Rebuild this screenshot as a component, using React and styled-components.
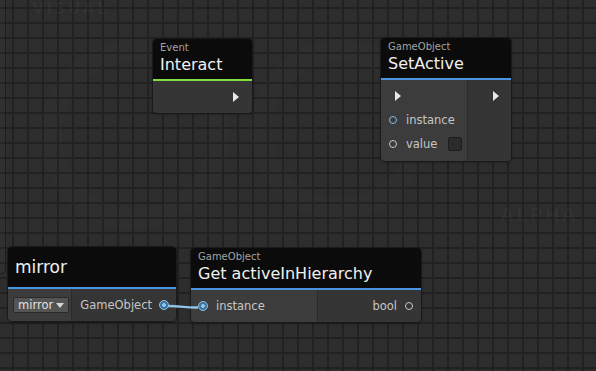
import React from 'react';
import styled, { createGlobalStyle } from 'styled-components';

const GlobalStyle = createGlobalStyle`
  *, *::before, *::after {
    box-sizing: border-box;
  }
  html, body {
    margin: 0;
    padding: 0;
    background: #2c2c2c;
  }
  body {
    font-family: 'DejaVu Sans', 'Liberation Sans', sans-serif;
  }
`;

const Canvas = styled.div`
  position: relative;
  width: 596px;
  height: 371px;
  overflow: hidden;
  background-color: #2d2d2d;
  background-image: linear-gradient(to right, #212121 2px, transparent 2px),
    linear-gradient(to bottom, #212121 2px, transparent 2px);
  background-size: 15px 15px;
  background-position: 12px 7px;
`;

const Watermark = styled.div`
  position: absolute;
  left: ${({ x }) => x}px;
  top: ${({ y }) => y}px;
  font-size: ${({ size }) => size}px;
  line-height: 1;
  font-weight: bold;
  letter-spacing: 2px;
  color: rgba(255, 255, 255, 0.03);
  pointer-events: none;
`;

const Ring = styled.div`
  position: absolute;
  left: ${({ x }) => x}px;
  top: ${({ y }) => y}px;
  width: ${({ size }) => size}px;
  height: ${({ size }) => size}px;
  border-radius: 50%;
  border: 22px solid rgba(255, 255, 255, 0.012);
  pointer-events: none;
`;

const Frame = styled.div`
  position: absolute;
  left: -10px;
  top: -10px;
  width: 16px;
  height: 284px;
  border: 1px solid #1c1c1c;
  border-radius: 5px;
  background: rgba(255, 255, 255, 0.015);
`;

const Node = styled.div`
  position: absolute;
  left: ${({ x }) => x}px;
  top: ${({ y }) => y}px;
  width: ${({ w }) => w}px;
  border: 1px solid #1a1a1a;
  border-radius: 5px;
  overflow: hidden;
  display: flex;
  flex-direction: column;
  box-shadow: 0 1px 2px rgba(0, 0, 0, 0.25);
`;

const Header = styled.div`
  height: 42px;
  background: #0b0b0b;
  border-bottom: 2px solid ${({ accent }) => accent};
  padding: 0 7px;
  display: flex;
  flex-direction: column;
  justify-content: ${({ centered }) => (centered ? 'center' : 'flex-start')};
`;

const Category = styled.div`
  margin-top: 3px;
  font-size: 10px;
  line-height: 11px;
  color: #a3a3a3;
`;

const Title = styled.div`
  margin-top: ${({ centered }) => (centered ? '0' : '2px')};
  font-size: ${({ big }) => (big ? 17 : 16)}px;
  line-height: 20px;
  color: #f0f0f0;
  white-space: nowrap;
`;

const Body = styled.div`
  display: flex;
  height: ${({ h }) => h}px;
`;

const Column = styled.div`
  width: ${({ w }) => (w ? `${w}px` : 'auto')};
  flex: ${({ w }) => (w ? 'none' : '1')};
  background: ${({ light }) => (light ? '#3c3c3c' : '#353535')};
  border-left: ${({ divider }) => (divider ? '1px solid #2a2a2a' : 'none')};
  display: flex;
  flex-direction: column;
  padding-top: ${({ pt }) => pt || 0}px;
`;

const Row = styled.div`
  height: ${({ h }) => h || 24}px;
  display: flex;
  align-items: center;
  justify-content: ${({ right }) => (right ? 'flex-end' : 'flex-start')};
  padding: 0 ${({ pr }) => pr || 0}px 0 ${({ pl }) => pl || 0}px;
  gap: ${({ gap }) => gap || 0}px;
  font-size: 11.5px;
  color: #c6c6c6;
  white-space: nowrap;
`;

const Arrow = styled.div`
  width: 0;
  height: 0;
  border-top: 5px solid transparent;
  border-bottom: 5px solid transparent;
  border-left: 6px solid #e8e8e8;
`;

const Port = styled.div`
  width: 8px;
  height: 8px;
  border-radius: 50%;
  border: 1.5px solid ${({ color }) => color};
  flex: none;
`;

const LinkedPort = styled.div`
  width: 10px;
  height: 10px;
  border-radius: 50%;
  border: 1.5px solid #8ec3ea;
  background: radial-gradient(circle, #8ec3ea 0 1.8px, #3f7098 2.2px);
  flex: none;
`;

const Check = styled.div`
  width: 14px;
  height: 14px;
  margin-left: 2px;
  background: #2b2b2b;
  border: 1px solid #1d1d1d;
  border-radius: 2px;
`;

const Dropdown = styled.div`
  height: 16px;
  padding: 0 4px;
  display: flex;
  align-items: center;
  gap: 3px;
  background: #545454;
  border: 1px solid #2a2a2a;
  border-radius: 2px;
  font-size: 11.5px;
  color: #e0e0e0;
`;

const Caret = styled.span`
  width: 0;
  height: 0;
  border-left: 4px solid transparent;
  border-right: 4px solid transparent;
  border-top: 5px solid #d8d8d8;
`;

const Wire = styled.svg`
  position: absolute;
  left: 0;
  top: 0;
  pointer-events: none;
`;

const GREEN = '#7ee03e';
const BLUE = '#4a94e4';

export default function App() {
  return (
    <>
      <GlobalStyle />
      <Canvas>
        <Watermark x={32} y={1} size={16}>VISUAL</Watermark>
        <Ring x={40} y={40} size={190} />
        <Ring x={250} y={40} size={180} />
        <Watermark x={500} y={206} size={18}>ALPHA</Watermark>
        <Frame />

        <Node x={152} y={38} w={101}>
          <Header accent={GREEN}>
            <Category>Event</Category>
            <Title>Interact</Title>
          </Header>
          <Body h={32}>
            <Column>
              <Row right pr={13} h={32}>
                <Arrow />
              </Row>
            </Column>
          </Body>
        </Node>

        <Node x={380} y={37} w={132}>
          <Header accent={BLUE}>
            <Category>GameObject</Category>
            <Title>SetActive</Title>
          </Header>
          <Body h={81}>
            <Column light w={86} pt={4}>
              <Row pl={14}>
                <Arrow />
              </Row>
              <Row pl={8} gap={9}>
                <Port color="#86bde6" />
                instance
              </Row>
              <Row pl={8} gap={9}>
                <Port color="#c8c8c8" />
                value
                <Check />
              </Row>
            </Column>
            <Column divider pt={4}>
              <Row right pr={12}>
                <Arrow />
              </Row>
            </Column>
          </Body>
        </Node>

        <Node x={7} y={246} w={170}>
          <Header accent={BLUE} centered>
            <Title centered big>
              mirror
            </Title>
          </Header>
          <Body h={32}>
            <Column light w={63}>
              <Row pl={5} h={32}>
                <Dropdown>
                  mirror
                  <Caret />
                </Dropdown>
              </Row>
            </Column>
            <Column divider>
              <Row right pr={7} gap={7} h={32}>
                GameObject
                <LinkedPort />
              </Row>
            </Column>
          </Body>
        </Node>

        <Node x={190} y={247} w={232}>
          <Header accent={BLUE}>
            <Category>GameObject</Category>
            <Title>Get activeInHierarchy</Title>
          </Header>
          <Body h={32}>
            <Column light w={126}>
              <Row pl={7} gap={8} h={32}>
                <LinkedPort />
                instance
              </Row>
            </Column>
            <Column divider>
              <Row right pr={8} gap={8} h={32}>
                bool
                <Port color="#c8c8c8" />
              </Row>
            </Column>
          </Body>
        </Node>

        <Wire width={596} height={371}>
          <path
            d="M168 306 C 182 306, 186 308, 198 307.5"
            stroke="#8ec3ea"
            strokeWidth="2.5"
            fill="none"
          />
        </Wire>
      </Canvas>
    </>
  );
}
